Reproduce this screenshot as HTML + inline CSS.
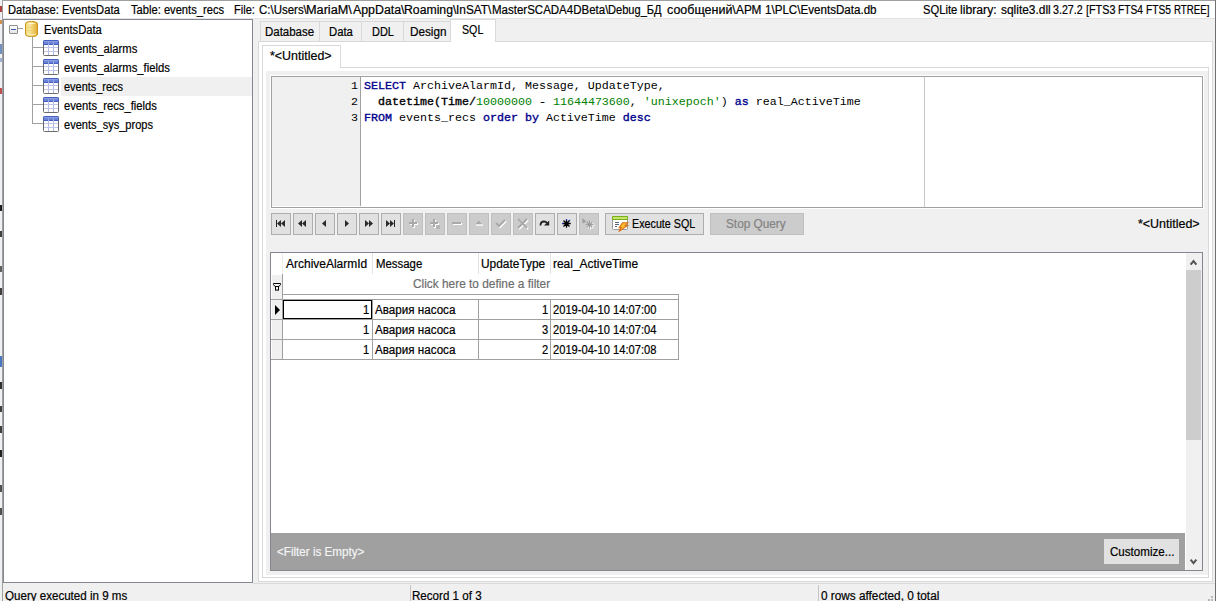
<!DOCTYPE html>
<html><head><meta charset="utf-8">
<style>
*{margin:0;padding:0;box-sizing:border-box}
html,body{width:1216px;height:601px;overflow:hidden;background:#f0f0f0;position:relative}
.a{position:absolute}
.t{position:absolute;font:12px "Liberation Sans",sans-serif;line-height:20px;white-space:pre;transform-origin:0 0;-webkit-text-stroke:0.2px currentColor}
.m{position:absolute;font:11.67px "Liberation Mono",monospace;line-height:16px;white-space:pre}
.b{-webkit-text-stroke:0.35px #000}
.kw{color:#00008b;-webkit-text-stroke:0.35px #00008b}
.num{color:#008000}
.btn{position:absolute;top:213px;width:20px;height:22px;border:1px solid #adadad;background:#e1e1e1}
.dis{border-color:#bfbfbf;background:#cccccc}
</style></head><body>
<!-- left screen edge -->
<div class="a" style="left:0;top:0;width:2px;height:601px;background:#eef0f2"></div><div class="a" style="left:0;top:6px;width:2px;height:6px;background:#b04040"></div><div class="a" style="left:0;top:20px;width:2px;height:4px;background:#d09050"></div><div class="a" style="left:0;top:44px;width:2px;height:10px;background:#7090c0"></div><div class="a" style="left:0;top:58px;width:2px;height:4px;background:#a0b0d0"></div><div class="a" style="left:0;top:88px;width:2px;height:6px;background:#c05050"></div><div class="a" style="left:0;top:205px;width:2px;height:6px;background:#202020"></div><div class="a" style="left:0;top:231px;width:2px;height:6px;background:#404040"></div><div class="a" style="left:0;top:266px;width:2px;height:6px;background:#606060"></div><div class="a" style="left:0;top:288px;width:2px;height:7px;background:#404040"></div><div class="a" style="left:0;top:356px;width:2px;height:11px;background:#4a78c0"></div><div class="a" style="left:0;top:382px;width:2px;height:7px;background:#303030"></div><div class="a" style="left:0;top:406px;width:2px;height:6px;background:#404040"></div><div class="a" style="left:0;top:426px;width:2px;height:7px;background:#404040"></div><div class="a" style="left:0;top:450px;width:2px;height:7px;background:#202020"></div><div class="a" style="left:0;top:485px;width:2px;height:7px;background:#505050"></div><div class="a" style="left:0;top:508px;width:2px;height:7px;background:#505050"></div>
<div class="a" style="left:2px;top:0;width:1px;height:601px;background:#a0a0a0"></div>
<div class="a" style="left:1215px;top:0;width:1px;height:601px;background:#707070"></div>
<!-- top info bar -->
<div class="a" style="left:3px;top:0;width:1212px;height:1px;background:#a0a0a0"></div>
<div class="a" style="left:3px;top:1px;width:1212px;height:17px;background:#fff"></div>
<div class="a" style="left:3px;top:18px;width:1212px;height:1px;background:#e3e3e3"></div>
<!-- tree panel -->
<div class="a" style="left:3px;top:19px;width:250px;height:564px;border:1px solid #828790;background:#fff"></div>
<div class="a" style="left:61px;top:77px;width:191px;height:19px;background:#f0f0f0"></div>
<!-- tree lines -->
<div class="a" style="left:18px;top:28px;width:5px;height:1px;background:#a0a0a0"></div>
<div class="a" style="left:32px;top:37px;width:1px;height:87px;background:#a0a0a0"></div>
<div class="a" style="left:33px;top:47px;width:10px;height:1px;background:#a0a0a0"></div>
<div class="a" style="left:33px;top:66px;width:10px;height:1px;background:#a0a0a0"></div>
<div class="a" style="left:33px;top:85px;width:10px;height:1px;background:#a0a0a0"></div>
<div class="a" style="left:33px;top:104px;width:10px;height:1px;background:#a0a0a0"></div>
<div class="a" style="left:33px;top:123px;width:10px;height:1px;background:#a0a0a0"></div>
<!-- minus box -->
<div class="a" style="left:9px;top:25px;width:9px;height:9px;border:1px solid #8e8f8f;border-radius:1px;background:linear-gradient(#fff,#e4e4e4)"></div>
<div class="a" style="left:11px;top:29px;width:5px;height:1px;background:#3c5bb0"></div>
<!-- db icon -->
<svg class="a" style="left:25px;top:21px" width="13" height="16" viewBox="0 0 13 16">
<defs><linearGradient id="dbg" x1="0" x2="1" y1="0" y2="0"><stop offset="0" stop-color="#f2d878"/><stop offset="0.35" stop-color="#f8e69a"/><stop offset="1" stop-color="#e0a928"/></linearGradient></defs>
<path d="M0.5 3 Q0.5 0.5 6.5 0.5 Q12.5 0.5 12.5 3 L12.5 13 Q12.5 15.5 6.5 15.5 Q0.5 15.5 0.5 13 Z" fill="url(#dbg)" stroke="#c7951c"/>
<path d="M2 2.5 Q6.5 1 11 2.5 Q6.5 4 2 2.5 Z" fill="#fdf5c8"/>
<path d="M2 13 Q6.5 15 11 13" stroke="#fdf0b8" stroke-width="1" fill="none"/>
<path d="M2 6.5 H11 M2 9.5 H11" stroke="#eccb60" stroke-width="0.7" opacity="0.8"/>
</svg>
<svg class="a" style="left:43px;top:40px" width="16" height="16" viewBox="0 0 16 16">
<rect x="0.5" y="0.5" width="15" height="15" rx="1" fill="#fff" stroke="#6a6a6a"/>
<path d="M0.5 4.5 V1.5 Q0.5 0.5 1.5 0.5 H14.5 Q15.5 0.5 15.5 1.5 V4.5 Z" fill="#6a82d6" stroke="#4660c0"/>
<path d="M1 1.6 H15" stroke="#8ea0e6" stroke-width="1"/>
<path d="M5.5 1 V15 M10.5 1 V15" stroke="#b3bbe4" stroke-width="1"/>
<path d="M5.5 1 V4 M10.5 1 V4" stroke="#8fa0e2" stroke-width="1"/>
<path d="M1 7.5 H15 M1 11.5 H15" stroke="#bfc6ea" stroke-width="1"/>
</svg>
<svg class="a" style="left:43px;top:59px" width="16" height="16" viewBox="0 0 16 16">
<rect x="0.5" y="0.5" width="15" height="15" rx="1" fill="#fff" stroke="#6a6a6a"/>
<path d="M0.5 4.5 V1.5 Q0.5 0.5 1.5 0.5 H14.5 Q15.5 0.5 15.5 1.5 V4.5 Z" fill="#6a82d6" stroke="#4660c0"/>
<path d="M1 1.6 H15" stroke="#8ea0e6" stroke-width="1"/>
<path d="M5.5 1 V15 M10.5 1 V15" stroke="#b3bbe4" stroke-width="1"/>
<path d="M5.5 1 V4 M10.5 1 V4" stroke="#8fa0e2" stroke-width="1"/>
<path d="M1 7.5 H15 M1 11.5 H15" stroke="#bfc6ea" stroke-width="1"/>
</svg>
<svg class="a" style="left:43px;top:78px" width="16" height="16" viewBox="0 0 16 16">
<rect x="0.5" y="0.5" width="15" height="15" rx="1" fill="#fff" stroke="#6a6a6a"/>
<path d="M0.5 4.5 V1.5 Q0.5 0.5 1.5 0.5 H14.5 Q15.5 0.5 15.5 1.5 V4.5 Z" fill="#6a82d6" stroke="#4660c0"/>
<path d="M1 1.6 H15" stroke="#8ea0e6" stroke-width="1"/>
<path d="M5.5 1 V15 M10.5 1 V15" stroke="#b3bbe4" stroke-width="1"/>
<path d="M5.5 1 V4 M10.5 1 V4" stroke="#8fa0e2" stroke-width="1"/>
<path d="M1 7.5 H15 M1 11.5 H15" stroke="#bfc6ea" stroke-width="1"/>
</svg>
<svg class="a" style="left:43px;top:97px" width="16" height="16" viewBox="0 0 16 16">
<rect x="0.5" y="0.5" width="15" height="15" rx="1" fill="#fff" stroke="#6a6a6a"/>
<path d="M0.5 4.5 V1.5 Q0.5 0.5 1.5 0.5 H14.5 Q15.5 0.5 15.5 1.5 V4.5 Z" fill="#6a82d6" stroke="#4660c0"/>
<path d="M1 1.6 H15" stroke="#8ea0e6" stroke-width="1"/>
<path d="M5.5 1 V15 M10.5 1 V15" stroke="#b3bbe4" stroke-width="1"/>
<path d="M5.5 1 V4 M10.5 1 V4" stroke="#8fa0e2" stroke-width="1"/>
<path d="M1 7.5 H15 M1 11.5 H15" stroke="#bfc6ea" stroke-width="1"/>
</svg>
<svg class="a" style="left:43px;top:116px" width="16" height="16" viewBox="0 0 16 16">
<rect x="0.5" y="0.5" width="15" height="15" rx="1" fill="#fff" stroke="#6a6a6a"/>
<path d="M0.5 4.5 V1.5 Q0.5 0.5 1.5 0.5 H14.5 Q15.5 0.5 15.5 1.5 V4.5 Z" fill="#6a82d6" stroke="#4660c0"/>
<path d="M1 1.6 H15" stroke="#8ea0e6" stroke-width="1"/>
<path d="M5.5 1 V15 M10.5 1 V15" stroke="#b3bbe4" stroke-width="1"/>
<path d="M5.5 1 V4 M10.5 1 V4" stroke="#8fa0e2" stroke-width="1"/>
<path d="M1 7.5 H15 M1 11.5 H15" stroke="#bfc6ea" stroke-width="1"/>
</svg>
<!-- right side tabs -->
<div class="a" style="left:260px;top:21px;width:191px;height:21px;border:1px solid #d9d9d9;border-bottom:none;background:#f0f0f0"></div>
<div class="a" style="left:319px;top:22px;width:1px;height:19px;background:#d9d9d9"></div>
<div class="a" style="left:361px;top:22px;width:1px;height:19px;background:#d9d9d9"></div>
<div class="a" style="left:403px;top:22px;width:1px;height:19px;background:#d9d9d9"></div>
<!-- outer pane -->
<div class="a" style="left:258px;top:41px;width:955px;height:541px;border:1px solid #d9d9d9;background:#fff"></div>
<!-- SQL tab selected -->
<div class="a" style="left:450px;top:19px;width:46px;height:23px;border:1px solid #d9d9d9;border-bottom:none;background:#fff"></div>
<!-- inner tab pane -->
<div class="a" style="left:262px;top:67px;width:947px;height:511px;border:1px solid #d9d9d9;background:#fff"></div>
<div class="a" style="left:262px;top:45px;width:79px;height:23px;border:1px solid #d9d9d9;border-bottom:none;background:#fff"></div>
<div class="a" style="left:266px;top:71px;width:942px;height:504px;background:#f0f0f0"></div>
<!-- editor -->
<div class="a" style="left:270px;top:75px;width:934px;height:134px;background:#fff"></div>
<div class="a" style="left:271px;top:76px;width:932px;height:132px;border:1px solid #a0a0a0;background:#fff"></div>
<div class="a" style="left:272px;top:77px;width:88px;height:129px;background:#f0f0f0"></div>
<div class="a" style="left:360px;top:77px;width:1px;height:129px;background:#a0a0a0"></div>
<div class="a" style="left:924px;top:77px;width:1px;height:130px;background:#c8c8c8"></div>
<div class="m" style="left:300px;width:58px;text-align:right;top:78px;color:#000">1</div>
<div class="m" style="left:300px;width:58px;text-align:right;top:94px;color:#000">2</div>
<div class="m" style="left:300px;width:58px;text-align:right;top:110px;color:#000">3</div>
<div class="m" style="left:364px;top:78px;color:#000"><span class="kw">SELECT</span> ArchiveAlarmId, Message, UpdateType,</div>
<div class="m" style="left:364px;top:94px;color:#000">  <span class="b">datetime(Time/</span><span class="num">10000000</span> <span class="b">-</span> <span class="num">11644473600</span>, <span class="num">'unixepoch'</span>) <span class="kw">as</span> real_ActiveTime</div>
<div class="m" style="left:364px;top:110px;color:#000"><span class="kw">FROM</span> events_recs <span class="kw">order by</span> ActiveTime <span class="kw">desc</span></div>
<!-- toolbar buttons -->
<div class="btn" style="left:271px"><svg class="a" style="left:-1px;top:-1px" width="20" height="22" viewBox="0 0 20 22"><rect x="5" y="7" width="1" height="7" fill="#222"/><path d="M6 10.5 L10 7 V14 Z M10 10.5 L14 7 V14 Z" fill="#2a2a2a"/></svg></div>
<div class="btn" style="left:293px"><svg class="a" style="left:-1px;top:-1px" width="20" height="22" viewBox="0 0 20 22"><path d="M5 10.5 L9 7 V14 Z M9 10.5 L13 7 V14 Z" fill="#2a2a2a"/></svg></div>
<div class="btn" style="left:315px"><svg class="a" style="left:-1px;top:-1px" width="20" height="22" viewBox="0 0 20 22"><path d="M7 10.5 L11 7 V14 Z" fill="#2a2a2a"/></svg></div>
<div class="btn" style="left:337px"><svg class="a" style="left:-1px;top:-1px" width="20" height="22" viewBox="0 0 20 22"><path d="M8 7 L12 10.5 L8 14 Z" fill="#2a2a2a"/></svg></div>
<div class="btn" style="left:359px"><svg class="a" style="left:-1px;top:-1px" width="20" height="22" viewBox="0 0 20 22"><path d="M6 7 L10 10.5 L6 14 Z M10 7 L14 10.5 L10 14 Z" fill="#2a2a2a"/></svg></div>
<div class="btn" style="left:381px"><svg class="a" style="left:-1px;top:-1px" width="20" height="22" viewBox="0 0 20 22"><path d="M5 7 L9 10.5 L5 14 Z M9 7 L13 10.5 L9 14 Z" fill="#2a2a2a"/><rect x="13" y="7" width="1" height="7" fill="#222"/></svg></div>
<div class="btn dis" style="left:403px"><svg class="a" style="left:-1px;top:-1px" width="20" height="22" viewBox="0 0 20 22"><path d="M9 6 H11 V9 H14 V11 H11 V14 H9 V11 H6 V9 H9 Z" fill="#fff" transform="translate(1,1)"/><path d="M9 6 H11 V9 H14 V11 H11 V14 H9 V11 H6 V9 H9 Z" fill="#a9a9a9"/></svg></div>
<div class="btn dis" style="left:425px"><svg class="a" style="left:-1px;top:-1px" width="20" height="22" viewBox="0 0 20 22"><path d="M8 6 H10 V9 H13 V11 H10 V14 H8 V11 H5 V9 H8 Z" fill="#fff" transform="translate(1,1)"/><path d="M8 6 H10 V9 H13 V11 H10 V14 H8 V11 H5 V9 H8 Z" fill="#a9a9a9"/><rect x="11" y="12" width="4" height="4" fill="#b5b5b5"/></svg></div>
<div class="btn dis" style="left:447px"><svg class="a" style="left:-1px;top:-1px" width="20" height="22" viewBox="0 0 20 22"><path d="M5 9 H14 V11 H5 Z" fill="#fff" transform="translate(1,1)"/><path d="M5 9 H14 V11 H5 Z" fill="#a9a9a9"/></svg></div>
<div class="btn dis" style="left:469px"><svg class="a" style="left:-1px;top:-1px" width="20" height="22" viewBox="0 0 20 22"><path d="M6.5 11 L9.8 7.8 L13 11 Z" fill="#a9a9a9"/><rect x="7" y="11.5" width="7" height="1.2" fill="#fff"/></svg></div>
<div class="btn dis" style="left:491px"><svg class="a" style="left:-1px;top:-1px" width="20" height="22" viewBox="0 0 20 22"><path d="M5 10 L8 13 L14 7" stroke="#fff" stroke-width="2" fill="none" transform="translate(1,1)"/><path d="M5 10 L8 13 L14 7" stroke="#a9a9a9" stroke-width="2" fill="none"/></svg></div>
<div class="btn dis" style="left:513px"><svg class="a" style="left:-1px;top:-1px" width="20" height="22" viewBox="0 0 20 22"><path d="M5 6 L14 15 M14 6 L5 15" stroke="#fff" stroke-width="2" fill="none" transform="translate(1,1)"/><path d="M5 6 L14 15 M14 6 L5 15" stroke="#a9a9a9" stroke-width="2" fill="none"/></svg></div>
<div class="btn" style="left:535px"><svg class="a" style="left:-1px;top:-1px" width="20" height="22" viewBox="0 0 20 22"><path d="M5.5 12.5 Q5.5 8.5 9 8.5 Q11 8.5 12 10" stroke="#222" stroke-width="1.8" fill="none"/><path d="M9 12.5 H14.2 V7.5 Z" fill="#222"/></svg></div>
<div class="btn" style="left:557px"><svg class="a" style="left:-1px;top:-1px" width="20" height="22" viewBox="0 0 20 22"><path d="M9.5 6.3 V14.7 M5.3 10.5 H13.7 M6.5 7.5 L12.5 13.5 M12.5 7.5 L6.5 13.5" stroke="#000" stroke-width="1.3"/><circle cx="9.5" cy="10.5" r="1.6" fill="#000"/><rect x="9" y="6.3" width="1" height="1.2" fill="#1030d0"/><rect x="12" y="6.8" width="1.2" height="1.2" fill="#1030d0"/><rect x="5.3" y="10" width="1.2" height="1" fill="#1030d0"/></svg></div>
<div class="btn dis" style="left:579px"><svg class="a" style="left:-1px;top:-1px" width="20" height="22" viewBox="0 0 20 22"><path d="M3.5 5 L7 8.5 L3.5 10.5 Z" fill="#9a9a9a"/><g transform="translate(1,1)"><path d="M10.5 7.5 V15.5 M6.5 11.5 H14.5 M7.7 8.7 L13.3 14.3 M13.3 8.7 L7.7 14.3" stroke="#fff" stroke-width="1.3"/></g><path d="M10.5 7.5 V15.5 M6.5 11.5 H14.5 M7.7 8.7 L13.3 14.3 M13.3 8.7 L7.7 14.3" stroke="#a3a3a3" stroke-width="1.3"/><circle cx="10.5" cy="11.5" r="1.6" fill="#9a9a9a"/></svg></div>
<div class="btn" style="left:605px;width:99px"></div>
<svg class="a" style="left:611px;top:215px" width="19" height="19" viewBox="0 0 19 19">
<rect x="1.5" y="1.5" width="15" height="13" rx="1" fill="#fff" stroke="#9a9a9a"/>
<rect x="1" y="1" width="16" height="4" rx="1" fill="#78b01a"/>
<rect x="2" y="2" width="14" height="2" fill="#c6e36a"/>
<path d="M4 7.5 H8 M4 9.5 H8 M4 11.5 H6" stroke="#5a6478" stroke-width="1"/>
<path d="M11.5 7.8 L16.8 7.8 L14.3 10.6 L16.5 10.6 L7.8 16.6 L10.2 12.6 L8.2 12.6 Z" fill="#f9bb2c" stroke="#d9701a" stroke-width="1.1"/>
</svg>
<div class="btn dis" style="left:710px;width:94px"></div>
<!-- grid -->
<div class="a" style="left:270px;top:252px;width:933px;height:319px;border:1px solid #828790;background:#fff"></div>
<div class="a" style="left:282px;top:253px;width:1px;height:21px;background:#ececec"></div>
<div class="a" style="left:372px;top:253px;width:1px;height:21px;background:#e3e3e3"></div>
<div class="a" style="left:478px;top:253px;width:1px;height:21px;background:#e3e3e3"></div>
<div class="a" style="left:550px;top:253px;width:1px;height:21px;background:#e3e3e3"></div>
<div class="a" style="left:272px;top:275px;width:10px;height:24px;background:#f0f0f0"></div>
<div class="a" style="left:282px;top:274px;width:1px;height:86px;background:#a0a0a0"></div>
<div class="a" style="left:283px;top:294px;width:396px;height:1px;background:#a0a0a0"></div>
<div class="a" style="left:678px;top:294px;width:1px;height:66px;background:#a0a0a0"></div>
<div class="a" style="left:271px;top:299px;width:408px;height:1px;background:#a0a0a0"></div>
<div class="a" style="left:271px;top:319px;width:408px;height:1px;background:#a0a0a0"></div>
<div class="a" style="left:271px;top:339px;width:408px;height:1px;background:#a0a0a0"></div>
<div class="a" style="left:271px;top:359px;width:408px;height:1px;background:#a0a0a0"></div>
<div class="a" style="left:372px;top:299px;width:1px;height:61px;background:#a0a0a0"></div>
<div class="a" style="left:478px;top:299px;width:1px;height:61px;background:#a0a0a0"></div>
<div class="a" style="left:550px;top:299px;width:1px;height:61px;background:#a0a0a0"></div>
<div class="a" style="left:272px;top:300px;width:10px;height:19px;background:#f0f0f0"></div>
<div class="a" style="left:272px;top:320px;width:10px;height:19px;background:#f0f0f0"></div>
<div class="a" style="left:272px;top:340px;width:10px;height:19px;background:#f0f0f0"></div>
<div class="a" style="left:283px;top:300px;width:89px;height:19px;border:1px solid #000"></div>
<svg class="a" style="left:274px;top:304px" width="8" height="12" viewBox="0 0 8 12"><path d="M1 1 L6 6 L1 11 Z" fill="#000"/></svg>
<svg class="a" style="left:272px;top:282px" width="10" height="10" viewBox="0 0 10 10"><path d="M1.5 1.5 H8.5 V2.5 L7 4.5 H3 L1.5 2.5 Z" fill="none" stroke="#000"/><rect x="3.5" y="4.5" width="3" height="3.6" fill="none" stroke="#000"/></svg>
<div class="a" style="left:1185px;top:253px;width:1px;height:317px;background:#ffffff"></div>
<div class="a" style="left:1186px;top:253px;width:16px;height:317px;background:#f0f0f0"></div>
<div class="a" style="left:1186px;top:270px;width:15px;height:170px;background:#cdcdcd"></div>
<svg class="a" style="left:1186px;top:253px" width="16" height="17" viewBox="0 0 16 17"><path d="M4.6 11.6 L7.5 8 L10.4 11.6" stroke="#555" stroke-width="2" fill="none"/></svg>
<svg class="a" style="left:1186px;top:553px" width="16" height="17" viewBox="0 0 16 17"><path d="M4.6 6.6 L7.5 10.2 L10.4 6.6" stroke="#555" stroke-width="2" fill="none"/></svg>
<div class="a" style="left:271px;top:533px;width:914px;height:37px;background:#a0a0a0"></div>
<div class="a" style="left:1104px;top:539px;width:75px;height:25px;background:#e1e1e1"></div>
<!-- status bar -->
<div class="a" style="left:253px;top:583px;width:962px;height:1px;background:#dadada"></div>
<div class="a" style="left:410px;top:585px;width:1px;height:16px;background:#c4c4c4"></div>
<div class="a" style="left:818px;top:585px;width:1px;height:16px;background:#c4c4c4"></div>
<div class="a" style="left:1211px;top:596px;width:2px;height:2px;background:#b8b8b8"></div>
<div class="a" style="left:1208px;top:599px;width:2px;height:2px;background:#b8b8b8"></div>
<div class="a" style="left:1211px;top:599px;width:2px;height:2px;background:#b8b8b8"></div>
<div class="t" style="left:7.67px;top:0px;color:#000;transform:scaleX(0.9303)">Database: EventsData</div>
<div class="t" style="left:131.00px;top:0px;color:#000;transform:scaleX(0.9300)">Table: events_recs</div>
<div class="t" style="left:234.08px;top:0px;color:#000;transform:scaleX(0.9190)">File:</div>
<div class="t" style="left:258.70px;top:0px;color:#000;transform:scaleX(0.9560)">C:\Users\</div>
<div class="t" style="left:305.94px;top:0px;color:#000;transform:scaleX(1.0581)">MariaM\</div>
<div class="t" style="left:353.00px;top:0px;color:#000;transform:scaleX(1.0300)">AppData\</div>
<div class="t" style="left:403.98px;top:0px;color:#000;transform:scaleX(1.0196)">Roaming\</div>
<div class="t" style="left:456.41px;top:0px;color:#000;transform:scaleX(0.9886)">InSAT\</div>
<div class="t" style="left:491.54px;top:0px;color:#000;transform:scaleX(0.9587)">MasterSCADA4DBeta\</div>
<div class="t" style="left:608.08px;top:0px;color:#000;transform:scaleX(0.9228)">Debug_БД</div>
<div class="t" style="left:666.80px;top:0px;color:#000;transform:scaleX(1.0409)">сообщений\</div>
<div class="t" style="left:736.00px;top:0px;color:#000;transform:scaleX(0.9840)">АРМ</div>
<div class="t" style="left:765.33px;top:0px;color:#000;transform:scaleX(0.9667)">1\PLC\EventsData.db</div>
<div class="t" style="left:923.37px;top:0px;color:#000;transform:scaleX(0.9343)">SQLite</div>
<div class="t" style="left:960.28px;top:0px;color:#000;transform:scaleX(1.0176)">library:</div>
<div class="t" style="left:1000.80px;top:0px;color:#000;transform:scaleX(0.9939)">sqlite3.dll</div>
<div class="t" style="left:1053.40px;top:0px;color:#000;transform:scaleX(0.8909)">3.27.2</div>
<div class="t" style="left:1086.00px;top:0px;color:#000;transform:scaleX(0.9000)">[FTS3</div>
<div class="t" style="left:1118.05px;top:0px;color:#000;transform:scaleX(0.8536)">FTS4</div>
<div class="t" style="left:1146.05px;top:0px;color:#000;transform:scaleX(0.8536)">FTS5</div>
<div class="t" style="left:1174.09px;top:0px;color:#000;transform:scaleX(0.8119)">RTREE]</div>
<div class="t" style="left:43.57px;top:20px;color:#000;transform:scaleX(0.9311)">EventsData</div>
<div class="t" style="left:63.50px;top:39px;color:#000;transform:scaleX(0.9397)">events_alarms</div>
<div class="t" style="left:63.50px;top:58px;color:#000;transform:scaleX(0.9398)">events_alarms_fields</div>
<div class="t" style="left:63.50px;top:77px;color:#000;transform:scaleX(0.9123)">events_recs</div>
<div class="t" style="left:63.50px;top:96px;color:#000;transform:scaleX(0.9343)">events_recs_fields</div>
<div class="t" style="left:63.50px;top:115px;color:#000;transform:scaleX(0.9196)">events_sys_props</div>
<div class="t" style="left:265.44px;top:22px;color:#000;transform:scaleX(0.9560)">Database</div>
<div class="t" style="left:328.56px;top:22px;color:#000;transform:scaleX(0.9400)">Data</div>
<div class="t" style="left:371.99px;top:22px;color:#000;transform:scaleX(0.9130)">DDL</div>
<div class="t" style="left:409.52px;top:22px;color:#000;transform:scaleX(0.9778)">Design</div>
<div class="t" style="left:461.51px;top:20px;color:#000;transform:scaleX(0.8870)">SQL</div>
<div class="t" style="left:270.00px;top:46px;color:#000;transform:scaleX(1.0373)">*&lt;Untitled&gt;</div>
<div class="t" style="left:631.90px;top:214px;color:#000;transform:scaleX(0.8957)">Execute SQL</div>
<div class="t" style="left:726.02px;top:214px;color:#838383;transform:scaleX(0.9833)">Stop Query</div>
<div class="t" style="left:1138.00px;top:214px;color:#000;transform:scaleX(1.0373)">*&lt;Untitled&gt;</div>
<div class="t" style="left:286.30px;top:254px;color:#000;transform:scaleX(0.9988)">ArchiveAlarmId</div>
<div class="t" style="left:375.75px;top:254px;color:#000;transform:scaleX(0.9511)">Message</div>
<div class="t" style="left:481.31px;top:254px;color:#000;transform:scaleX(0.9921)">UpdateType</div>
<div class="t" style="left:553.20px;top:254px;color:#000;transform:scaleX(0.9952)">real_ActiveTime</div>
<div class="t" style="left:412.60px;top:274px;color:#6d6d6d;transform:scaleX(0.9885)">Click here to define a filter</div>
<div class="t" style="left:276.90px;top:542px;color:#f4f4f4;transform:scaleX(0.9711)">&lt;Filter is Empty&gt;</div>
<div class="t" style="left:1109.70px;top:542px;color:#000;transform:scaleX(0.9652)">Customize...</div>
<div class="t" style="left:5.20px;top:586px;color:#000;transform:scaleX(0.9646)">Query executed in 9 ms</div>
<div class="t" style="left:412.43px;top:586px;color:#000;transform:scaleX(0.9662)">Record 1 of 3</div>
<div class="t" style="left:821.00px;top:586px;color:#000;transform:scaleX(0.9817)">0 rows affected, 0 total</div>
<div class="t" style="left:363.22px;top:300px;color:#000;transform:scaleX(0.9300)">1</div>
<div class="t" style="left:374.90px;top:300px;color:#000;transform:scaleX(0.9699)">Авария насоса</div>
<div class="t" style="left:542.12px;top:300px;color:#000;transform:scaleX(0.9300)">1</div>
<div class="t" style="left:553.00px;top:300px;color:#000;transform:scaleX(0.9279)">2019-04-10 14:07:00</div>
<div class="t" style="left:363.22px;top:320px;color:#000;transform:scaleX(0.9300)">1</div>
<div class="t" style="left:374.90px;top:320px;color:#000;transform:scaleX(0.9699)">Авария насоса</div>
<div class="t" style="left:542.12px;top:320px;color:#000;transform:scaleX(0.9300)">3</div>
<div class="t" style="left:553.00px;top:320px;color:#000;transform:scaleX(0.9279)">2019-04-10 14:07:04</div>
<div class="t" style="left:363.22px;top:340px;color:#000;transform:scaleX(0.9300)">1</div>
<div class="t" style="left:374.90px;top:340px;color:#000;transform:scaleX(0.9699)">Авария насоса</div>
<div class="t" style="left:542.12px;top:340px;color:#000;transform:scaleX(0.9300)">2</div>
<div class="t" style="left:553.00px;top:340px;color:#000;transform:scaleX(0.9279)">2019-04-10 14:07:08</div>
</body></html>
